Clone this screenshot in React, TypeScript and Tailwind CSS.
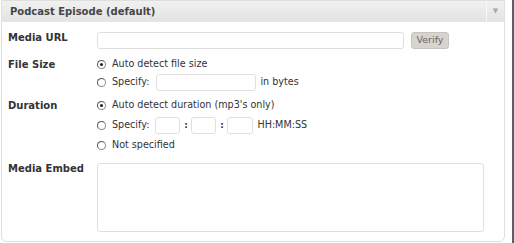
import React from "react";

function Radio({ checked }: { checked?: boolean }) {
  return (
    <span className="relative inline-flex items-center justify-center w-[9px] h-[9px] rounded-full border border-[#8a8a8a] border-l-[#555] border-t-[#555] bg-white mr-[6px] shrink-0">
      {checked && <span className="w-[3px] h-[3px] rounded-full bg-[#222]" />}
    </span>
  );
}

function Field({ w, h = 17 }: { w: number; h?: number }) {
  return (
    <span
      className="inline-block rounded-[3px] border border-[#dfdfdf] bg-white shrink-0"
      style={{ width: w, height: h }}
    />
  );
}

export default function App() {
  return (
    <div className="w-[514px] h-[243px] bg-white flex font-['DejaVu_Sans',sans-serif] text-[#333]">
      <div className="ml-[1px] w-[504px] h-[242px] border border-[#dfdfdf] rounded-b-[6px] flex flex-col overflow-hidden">
        <div className="h-[21px] flex items-stretch bg-gradient-to-b from-[#f1f1f1] to-[#e3e3e3] border-b border-[#e6e6e6]">
          <div className="flex-1 pl-[8px] flex items-center text-[10px] font-bold text-[#464646]">
            Podcast Episode (default)
          </div>
          <div className="w-[18px] border-l border-[#f8f8f8] flex items-center justify-center">
            <span className="text-[7px] text-[#aaa] leading-none">▼</span>
          </div>
        </div>
        <div className="flex flex-col">
          {/* Media URL */}
          <div className="flex mt-[10px] h-[17px]">
            <div className="w-[95px] pl-[6px] text-[10px] font-bold leading-[10px] pt-[1px]">Media URL</div>
            <Field w={307} />
            <span className="ml-[7px] w-[38px] h-[17px] rounded-[3px] border border-[#c8c4bd] bg-[#d7d4cf] text-[9.5px] text-[#666] flex items-center justify-center">
              Verify
            </span>
          </div>
          {/* File Size */}
          <div className="flex mt-[8px] h-[14px] items-center">
            <div className="w-[95px] pl-[6px] text-[10px] font-bold">File Size</div>
            <Radio checked />
            <span className="text-[9.6px]">Auto detect file size</span>
          </div>
          <div className="flex mt-[3px] h-[17px] items-center">
            <div className="w-[95px]" />
            <Radio />
            <span className="text-[9.6px] mr-[7px]">Specify:</span>
            <Field w={100} />
            <span className="text-[9.6px] ml-[4px]">in bytes</span>
          </div>
          {/* Duration */}
          <div className="flex mt-[7px] h-[14px] items-center">
            <div className="w-[95px] pl-[6px] text-[10px] font-bold">Duration</div>
            <Radio checked />
            <span className="text-[9.6px]">Auto detect duration (mp3's only)</span>
          </div>
          <div className="flex mt-[5px] h-[17px] items-center">
            <div className="w-[95px]" />
            <Radio />
            <span className="text-[9.6px] mr-[6px]">Specify:</span>
            <Field w={25} />
            <span className="text-[9px] font-bold w-[11px] text-center">:</span>
            <Field w={25} />
            <span className="text-[9px] font-bold w-[11px] text-center">:</span>
            <Field w={26} />
            <span className="text-[9.6px] ml-[4px]">HH:MM:SS</span>
          </div>
          <div className="flex mt-[4px] h-[14px] items-center">
            <div className="w-[95px]" />
            <Radio />
            <span className="text-[9.6px]">Not specified</span>
          </div>
          {/* Media Embed */}
          <div className="flex mt-[11px]">
            <div className="w-[95px] pl-[6px] text-[10px] font-bold leading-[12px]">Media Embed</div>
            <Field w={387} h={69} />
          </div>
        </div>
      </div>
      <div className="ml-[7px] w-[2px] h-full bg-[#5c5f6b]" />
    </div>
  );
}
